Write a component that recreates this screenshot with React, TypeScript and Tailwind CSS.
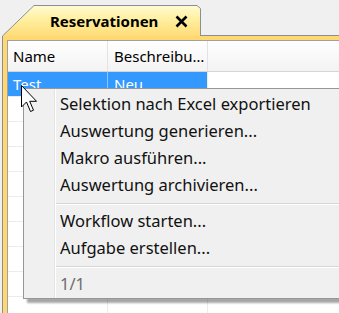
import React from "react";

const ITEMS_A = [
  "Selektion nach Excel exportieren",
  "Auswertung generieren...",
  "Makro ausführen...",
  "Auswertung archivieren...",
];
const ITEMS_B = ["Workflow starten...", "Aufgabe erstellen..."];

function Tab() {
  return (
    <div className="relative w-[199px] h-[31px] shrink-0">
      <svg className="absolute inset-0" width="199" height="31" viewBox="0 0 199 31">
        <defs>
          <linearGradient id="tabfill" x1="0" y1="0" x2="0" y2="1">
            <stop offset="0" stopColor="#fffbd2" />
            <stop offset="0.45" stopColor="#fff0a0" />
            <stop offset="1" stopColor="#ffdc78" />
          </linearGradient>
        </defs>
        <polygon points="0.5,31 32,0.5 195,0.5 198.5,3.5 198.5,31" fill="url(#tabfill)" />
        <polyline
          points="0.5,31 32,0.5 195,0.5 198.5,3.5 198.5,31"
          fill="none"
          stroke="#8a8e96"
          strokeWidth="1"
        />
      </svg>
      <div className="relative flex h-full items-center pl-[48px] pt-[1px]">
        <span className="text-[15px] font-bold text-black">Reservationen</span>
        <svg className="ml-[17px]" width="13" height="13" viewBox="0 0 13 13">
          <path d="M1.5 1.5 L11.5 11.5 M11.5 1.5 L1.5 11.5" stroke="#000" strokeWidth="2.6" />
        </svg>
      </div>
    </div>
  );
}

function Cursor() {
  return (
    <svg
      className="absolute left-[21px] top-[85px]"
      width="18"
      height="28"
      viewBox="0 0 18 28"
    >
      <path
        d="M0.5 0.5 L0.5 22 L5.5 17 L9.5 26.5 L12.5 25.2 L8.7 16.3 L15.5 16.3 Z"
        fill="#fff"
        stroke="#000"
        strokeWidth="1"
        strokeLinejoin="miter"
      />
    </svg>
  );
}

function Separator() {
  return (
    <div className="flex h-[9px] flex-col justify-center">
      <div className="h-px bg-[#d7d7d7]" />
      <div className="h-px bg-white" />
    </div>
  );
}

function ContextMenu() {
  return (
    <div className="absolute left-[23px] top-[88px] flex h-[211px] w-[330px] border border-[#979797] bg-[#f0f0f0] shadow-[4px_4px_2px_rgba(0,0,0,0.35)]">
      <div className="w-[31px] shrink-0 border-r border-[#e2e3e3]" />
      <div className="flex flex-1 flex-col border-l border-white pt-[2px] text-[16.5px] text-[#111]">
        {ITEMS_A.map((t) => (
          <div key={t} className="flex h-[27px] items-center pl-[4px]">
            {t}
          </div>
        ))}
        <Separator />
        {ITEMS_B.map((t) => (
          <div key={t} className="flex h-[27px] items-center pl-[4px]">
            {t}
          </div>
        ))}
        <Separator />
        <div className="flex h-[27px] items-center pl-[4px] text-[#6d6d6d]">1/1</div>
      </div>
    </div>
  );
}

export default function App() {
  const rows = Array.from({ length: 9 });
  return (
    <div className="relative h-[313px] w-[339px] overflow-hidden bg-[#f0f0f0] font-['Noto_Sans','Open_Sans',sans-serif]">
      {/* tab strip */}
      <div className="flex h-[36px] items-end pl-[2px]">
        <Tab />
        <div className="h-full flex-1 border-b border-[#8a8e96]" />
      </div>

      {/* yellow frame */}
      <div className="ml-[2px] h-[277px] border-l border-[#8a8e96] bg-[#ffd970] pl-[4px] pt-[4px]">
        <div className="h-full border-l border-t border-[#a0a0a0] bg-white">
          {/* header */}
          <div className="flex h-[31px] border-b border-[#d5d5d5] bg-gradient-to-b from-white to-[#f3f3f3] text-[15px] text-black">
            <div className="flex w-[100px] items-center border-r border-[#e3e3e3] pl-[5px]">Name</div>
            <div className="flex w-[100px] items-center border-r border-[#e3e3e3] pl-[6px]">Beschreibu…</div>
            <div className="flex-1" />
          </div>
          {/* selected row */}
          <div className="flex h-[25px] border-b border-[#ececec] text-[15px]">
            <div className="flex w-[100px] items-center border-r border-[#8fc4ff] bg-[#3399ff] pl-[5px] text-white">
              Test
            </div>
            <div className="flex w-[100px] items-center border-r border-[#ececec] bg-[#3399ff] pl-[6px] text-white">
              Neu
            </div>
            <div className="flex-1" />
          </div>
          {rows.map((_, i) => (
            <div key={i} className="flex h-[25px] border-b border-[#ececec]">
              <div className="w-[100px] border-r border-[#ececec]" />
              <div className="w-[100px] border-r border-[#ececec]" />
              <div className="flex-1" />
            </div>
          ))}
        </div>
      </div>

      <ContextMenu />
      <Cursor />
    </div>
  );
}
